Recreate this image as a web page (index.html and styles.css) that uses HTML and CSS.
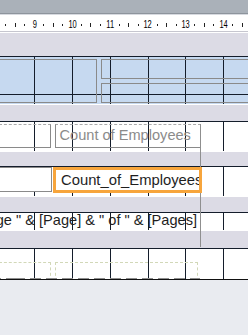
FILE: index.html
```html
<!DOCTYPE html>
<html>
<head>
<meta charset="utf-8">
<link rel="stylesheet" href="styles.css">
</head>
<body>
<div class="page">
  <div class="titlebar"></div>
  <div class="ruler">
    <div class="ruler-track">
      <div class="cm"><span class="num"></span><i class="dot"></i><i class="tick"></i><i class="dot"></i></div>
      <div class="cm"><span class="num"><b>9</b></span><i class="dot"></i><i class="tick"></i><i class="dot"></i></div>
      <div class="cm"><span class="num"><b>10</b></span><i class="dot"></i><i class="tick"></i><i class="dot"></i></div>
      <div class="cm"><span class="num"><b>11</b></span><i class="dot"></i><i class="tick"></i><i class="dot"></i></div>
      <div class="cm"><span class="num"><b>12</b></span><i class="dot"></i><i class="tick"></i><i class="dot"></i></div>
      <div class="cm"><span class="num"><b>13</b></span><i class="dot"></i><i class="tick"></i><i class="dot"></i></div>
      <div class="cm"><span class="num"><b>14</b></span><i class="dot"></i><i class="tick"></i><i class="dot"></i></div>
    </div>
  </div>

  <div class="band band-1"></div>
  <div class="section grid sec-1">
    <div class="ctl hdr-a"></div>
    <div class="ctl hdr-b"></div>
    <div class="ctl hdr-c"></div>
  </div>

  <div class="band band-2"></div>
  <div class="section grid sec-2">
    <div class="ctl lbl-left"></div>
    <div class="ctl lbl-count">Count of Employees</div>
  </div>

  <div class="band band-3"></div>
  <div class="section grid sec-3">
    <div class="ctl fld-left"></div>
    <div class="ctl fld-count">Count_of_Employees</div>
  </div>

  <div class="band band-4"></div>
  <div class="section grid sec-4">
    <div class="ctl page-expr"><span>="Page " &amp; [Page] &amp; " of " &amp; [Pages]</span></div>
  </div>

  <div class="band band-5"></div>
  <div class="section grid sec-5">
    <div class="ctl dash-a"></div>
    <div class="ctl dash-b"></div>
  </div>

  <div class="edge"></div>
</div>
</body>
</html>
```

FILE: styles.css
```css
html, body {
  margin: 0;
  padding: 0;
}

body {
  background: #e9ebf0;
  font-family: "Liberation Sans", Arial, sans-serif;
}

.page {
  position: relative;
  width: 248px;
  height: 335px;
  overflow: hidden;
  background: #e9ebf0;
}

.titlebar {
  height: 13px;
  background: #aab1b9;
  border-bottom: 1px solid #8d949c;
}

.ruler {
  height: 16px;
  background: #ffffff;
  border-top: 1px solid #d7dae0;
  border-bottom: 1px solid #c6c6cf;
  overflow: hidden;
}

.ruler-track {
  display: flex;
  margin-left: -8.225px;
  height: 16px;
}

.cm {
  flex: none;
  width: 37.8px;
  height: 16px;
  display: flex;
  justify-content: space-around;
  align-items: flex-start;
}

.num {
  width: 1px;
  display: flex;
  justify-content: center;
  margin-top: 5px;
}

.num b {
  display: block;
  font-weight: normal;
  font-size: 10px;
  line-height: 10px;
  color: #000;
  white-space: nowrap;
  transform: scaleX(0.75);
}

.dot {
  display: block;
  width: 1px;
  height: 2px;
  margin-top: 9px;
  background: #222;
}

.tick {
  display: block;
  width: 1px;
  height: 4px;
  margin-top: 8px;
  background: #222;
}

.band {
  background: #dcdbe5;
  border-top: 1px solid #ffffff;
}

.band-1 { height: 23px; }
.band-2 { height: 16px; }
.band-3 { height: 14px; }
.band-4 { height: 15px; }
.band-5 { height: 17px; }

.section {
  position: relative;
  overflow: hidden;
  background-color: #ffffff;
}

.grid {
  --gl: #141d2b;
  background-image:
    linear-gradient(var(--gl), var(--gl)),
    linear-gradient(var(--gl), var(--gl)),
    linear-gradient(var(--gl), var(--gl)),
    linear-gradient(var(--gl), var(--gl)),
    linear-gradient(var(--gl), var(--gl)),
    linear-gradient(var(--gl), var(--gl)),
    linear-gradient(var(--gl), var(--gl)),
    linear-gradient(var(--gl), var(--gl));
  background-repeat: no-repeat;
  background-size:
    100% 1px, 100% 1px,
    1px 100%, 1px 100%, 1px 100%, 1px 100%, 1px 100%, 1px 100%;
  background-position:
    0 0, 0 38px,
    34px 0, 72px 0, 110px 0, 148px 0, 185px 0, 223px 0;
}

.sec-1 { height: 48px; background-color: #c6d9f0; }
.sec-2 { height: 30px; }
.sec-3 { height: 30px; }
.sec-4 { height: 18px; }
.sec-5 {
  height: 31px;
  border-bottom: 1px solid #111;
}

.ctl {
  position: absolute;
  box-sizing: border-box;
}

/* page header section */
.hdr-a {
  left: -1px;
  top: 3px;
  width: 98px;
  height: 44px;
  border: 1px solid #8a8a8a;
}

.hdr-b {
  left: 101px;
  top: 3px;
  width: 160px;
  height: 20px;
  border: 1px solid #8a8a8a;
}

.hdr-c {
  left: 101px;
  top: 27px;
  width: 160px;
  height: 20px;
  border: 1px solid #8a8a8a;
}

/* label row */
.lbl-left {
  left: -1px;
  top: 3px;
  width: 52px;
  height: 24px;
  border: 1px solid #8a8a8a;
  border-top: 1px dashed #a9a9a9;
}

.lbl-count {
  left: 55px;
  top: 3px;
  width: 146px;
  height: 24px;
  border: 1px solid #8a8a8a;
  border-top: 1px dashed #a9a9a9;
  padding: 2px 0 0 3.5px;
  font-size: 14.6px;
  line-height: 16px;
  color: #8b8b8b;
  white-space: nowrap;
  overflow: hidden;
}

/* field row */
.fld-left {
  left: -1px;
  top: 1px;
  width: 53px;
  height: 25px;
  border: 1px solid #8a8a8a;
  background: #ffffff;
}

.fld-count {
  z-index: 2;
  left: 53px;
  top: 1px;
  width: 149px;
  height: 26px;
  border: 3px solid #f7a53c;
  background: #ffffff;
  padding: 2px 0 0 5px;
  font-size: 14.8px;
  line-height: 16px;
  color: #1e1e1e;
  white-space: nowrap;
  overflow: hidden;
}

/* page number expression */
.page-expr {
  left: 55px;
  top: 0;
  width: 142px;
  height: 18px;
  display: flex;
  justify-content: flex-end;
  font-size: 14.6px;
  line-height: 16px;
  color: #1e1e1e;
  white-space: nowrap;
}

.page-expr span {
  flex: none;
}

/* footer section dotted controls */
.dash-a {
  left: -1px;
  top: 14px;
  width: 52px;
  height: 30px;
  border: 1px dashed #d2d8b8;
}

.dash-b {
  left: 55px;
  top: 14px;
  width: 143px;
  height: 30px;
  border: 1px dashed #d2d8b8;
}

.sec-5::after {
  content: "";
  position: absolute;
  left: 0;
  bottom: 0;
  width: 200px;
  height: 1px;
  background: repeating-linear-gradient(to right, #8e8e8e 0 11px, transparent 11px 16px);
  background-position: 14px 0;
}

.edge {
  position: absolute;
  z-index: 1;
  left: 200px;
  top: 124px;
  width: 1px;
  height: 123px;
  background: #8f8f8f;
}
```
